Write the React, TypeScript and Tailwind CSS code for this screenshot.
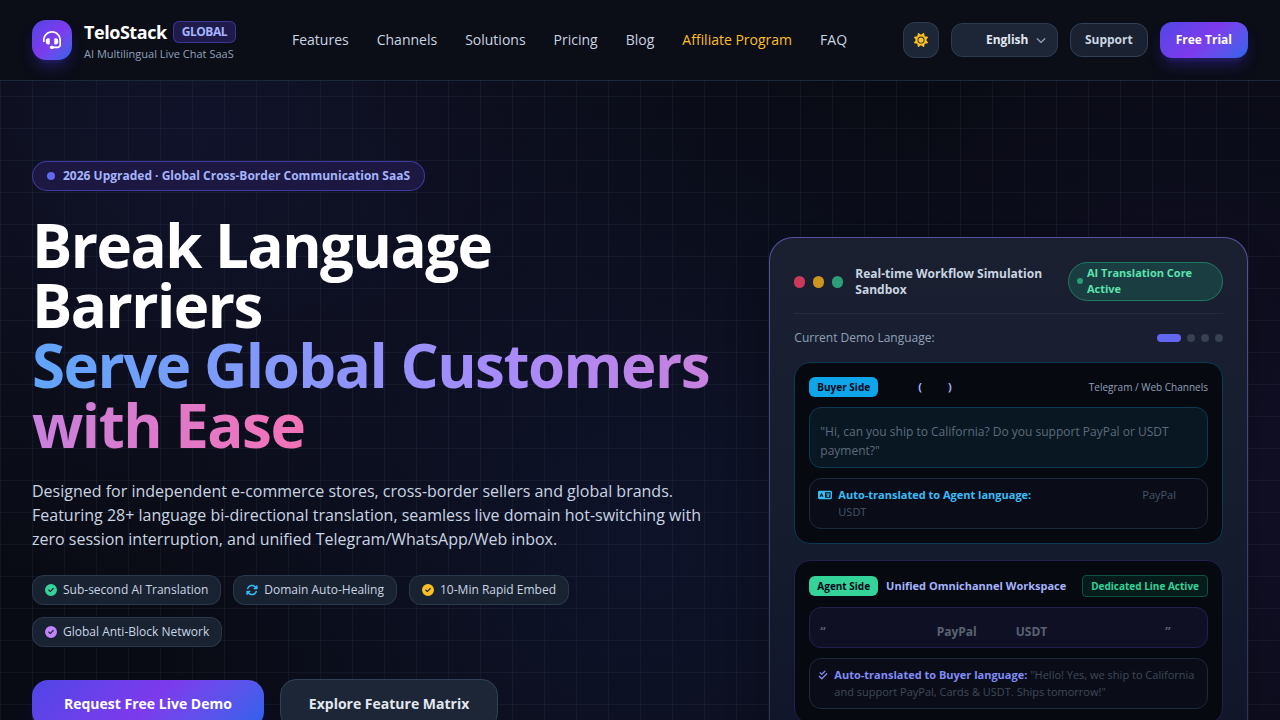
import {
  FaHeadset,
  FaSun,
  FaChevronDown,
  FaCircleCheck,
  FaArrowsRotate,
  FaLanguage,
  FaCheckDouble,
} from "react-icons/fa6";

const navLinks = [
  { label: "Features", href: "#features" },
  { label: "Channels", href: "#channels" },
  { label: "Solutions", href: "#solutions" },
  { label: "Pricing", href: "#pricing" },
  { label: "Blog", href: "#blog" },
  { label: "Affiliate Program", href: "#affiliate", highlight: true },
  { label: "FAQ", href: "#faq" },
];

const chips = [
  { label: "Sub-second AI Translation", Icon: FaCircleCheck, color: "text-[#34d399]" },
  { label: "Domain Auto-Healing", Icon: FaArrowsRotate, color: "text-[#38bdf8]" },
  { label: "10-Min Rapid Embed", Icon: FaCircleCheck, color: "text-[#fbbf24]" },
  { label: "Global Anti-Block Network", Icon: FaCircleCheck, color: "text-[#c084fc]" },
];

function Header() {
  return (
    <header className="border-b border-slate-800 bg-[#0b0d17]">
      <div className="flex h-20 items-center justify-between px-8">
        {/* Logo */}
        <a href="#home" className="flex items-center gap-3">
          <span className="flex h-10 w-10 items-center justify-center rounded-[14px] bg-linear-135 from-[#4f46e5] via-[#7c3aed] to-[#2563eb] shadow-lg shadow-indigo-600/30">
            <FaHeadset className="text-lg text-white" />
          </span>
          <span className="flex flex-col">
            <span className="flex items-center gap-1.5 text-lg leading-7 font-bold tracking-tight text-white">
              TeloStack
              <span className="rounded-md border border-indigo-500/40 bg-[#1e1b4b] px-2 text-xs leading-5 text-[#a5b4fc]">
                GLOBAL
              </span>
            </span>
            <span className="text-[11px] leading-4 text-slate-400">AI Multilingual Live Chat SaaS</span>
          </span>
        </a>

        {/* Navigation */}
        <nav className="flex items-center gap-7 text-sm">
          {navLinks.map((link) => (
            <a key={link.label} href={link.href} className={link.highlight ? "text-[#fbbf24]" : "text-slate-300"}>
              {link.label}
            </a>
          ))}
        </nav>

        {/* Actions */}
        <div className="flex items-center gap-3 text-xs font-bold">
          <button
            type="button"
            aria-label="Toggle theme"
            className="flex h-9 w-9 items-center justify-center rounded-xl border border-slate-700/80 bg-[#1c2636] text-[#fbbf24]"
          >
            <FaSun className="text-sm" />
          </button>
          <div className="relative">
            <select
              aria-label="Language"
              className="h-[34px] w-[107px] appearance-none rounded-xl border border-slate-700/80 bg-[#1c2636] pl-[34px] text-slate-200"
            >
              <option>English</option>
            </select>
            <FaChevronDown className="pointer-events-none absolute top-3 right-3 text-[10px] text-slate-400" />
          </div>
          <a
            href="#support"
            className="rounded-xl border border-slate-700 bg-[#1a2131] px-3.5 py-2 leading-4 text-slate-300"
          >
            Support
          </a>
          <a
            href="#trial"
            className="rounded-xl bg-linear-135 from-[#4f46e5] via-[#7c3aed] to-[#2563eb] px-4 py-2.5 leading-4 text-white shadow-lg shadow-indigo-600/30"
          >
            Free Trial
          </a>
        </div>
      </div>
    </header>
  );
}

function HeroCopy() {
  return (
    <div className="col-span-7">
      <div className="mb-6 flex">
        <p className="flex items-center gap-2 rounded-full border border-indigo-500/50 bg-[#1c1842] px-3.5 py-1.5 text-xs font-bold text-[#a5b4fc]">
          <span className="h-2 w-2 rounded-full bg-[#6366f1]"></span>
          2026 Upgraded · Global Cross-Border Communication SaaS
        </p>
      </div>
      <h1 className="mb-6 text-6xl leading-none font-bold tracking-tight text-white">
        Break Language Barriers
        <br />
        <span className="bg-[linear-gradient(to_right,#60a5fa,#a78bfa,#f472b6)] bg-clip-text text-transparent">
          Serve Global Customers with Ease
        </span>
      </h1>
      <p className="mb-6 max-w-2xl text-base text-slate-300">
        Designed for independent e-commerce stores, cross-border sellers and global brands. Featuring 28+ language
        bi-directional translation, seamless live domain hot-switching with zero session interruption, and unified
        Telegram/WhatsApp/Web inbox.
      </p>
      <ul className="mb-8 flex max-w-2xl flex-wrap gap-3">
        {chips.map(({ label, Icon, color }) => (
          <li
            key={label}
            className="flex items-center gap-1.5 rounded-xl border border-slate-700/70 bg-[#192231] px-3 py-1.5 text-xs text-slate-300"
          >
            <Icon className={color} />
            {label}
          </li>
        ))}
      </ul>
      <div className="flex items-center gap-4 text-sm font-bold">
        <a
          href="#demo"
          className="rounded-2xl bg-linear-135 from-[#4f46e5] via-[#7c3aed] to-[#2563eb] px-8 py-3.5 text-white shadow-xl shadow-indigo-600/20"
        >
          Request Free Live Demo
        </a>
        <a
          href="#matrix"
          className="rounded-2xl border border-slate-700 bg-[#1c2636] px-7 py-3.5 text-slate-200"
        >
          Explore Feature Matrix
        </a>
      </div>
    </div>
  );
}

function Sandbox() {
  return (
    <div className="col-span-5 mt-[76px] rounded-3xl bg-linear-to-b from-[#56509f] via-[#42436f] to-[#2b3350] p-px shadow-2xl shadow-black/40">
      <div className="rounded-[23px] bg-linear-to-b from-[#1b2031] via-[#151d2e] to-[#11152a] p-6">
        {/* Window bar */}
        <div className="flex items-center justify-between gap-3 border-b border-slate-700/40 pb-3">
          <div className="flex items-center gap-2">
            <span className="h-3 w-[11px] shrink-0 rounded-full bg-[#cb3a59]"></span>
            <span className="h-3 w-[11px] shrink-0 rounded-full bg-[#cb951f]"></span>
            <span className="h-3 w-[11px] shrink-0 rounded-full bg-[#2a9f78]"></span>
            <h2 className="ml-1 text-xs font-bold text-slate-300">Real-time Workflow Simulation Sandbox</h2>
          </div>
          <p className="flex w-[155px] shrink-0 items-center gap-1 rounded-full border border-[#1f7a63] bg-[#193d40] px-2 pt-0.5 pb-[3px] text-[11px] leading-4 font-bold text-[#5ce3b0]">
            <span className="h-1.5 w-1.5 shrink-0 rounded-full bg-[#2a9f78]"></span>
            AI Translation Core Active
          </p>
        </div>

        <div className="my-4 flex items-center justify-between">
          <p className="text-xs text-slate-400">Current Demo Language:</p>
          <div className="flex gap-1.5">
            <span className="h-2 w-6 rounded-full bg-[#6366f1]"></span>
            <span className="h-2 w-2 rounded-full bg-[#374151]"></span>
            <span className="h-2 w-2 rounded-full bg-[#374151]"></span>
            <span className="h-2 w-2 rounded-full bg-[#374151]"></span>
          </div>
        </div>

        {/* Buyer */}
        <section className="mb-4 rounded-2xl border border-[#0c3a52] bg-[#070911] p-3.5">
          <div className="flex items-center justify-between">
            <div className="flex items-center text-[11px] leading-5 font-bold">
              <span className="rounded-md bg-[#0ea5e9] px-2 text-[10px] text-slate-950">Buyer Side</span>
              <span className="ml-10 text-[#a5b4fc]">(</span>
              <span className="ml-[26px] text-[#a5b4fc]">)</span>
            </div>
            <span className="text-[10px] leading-5 text-slate-400">Telegram / Web Channels</span>
          </div>
          <p className="mt-2.5 rounded-xl border border-[#0c3a52] bg-[#081722] px-2.5 pt-3.5 pb-[7px] text-xs leading-[19px] text-[#5f6b7b]">
            "Hi, can you ship to California? Do you support PayPal or USDT payment?"
          </p>
          <div className="mt-2.5 flex gap-1.5 rounded-xl border border-slate-800 bg-[#0a0d17] px-2 pt-[7px] pb-2 text-[11px] leading-[17px] text-slate-600">
            <FaLanguage className="mt-0.5 shrink-0 text-sm text-[#38bdf8]" />
            <p>
              <strong className="mr-[111px] text-[#38bdf8]">Auto-translated to Agent language:</strong>
              PayPal
              <br />
              USDT
            </p>
          </div>
        </section>

        {/* Agent */}
        <section className="rounded-2xl border border-[#23204f] bg-[#070911] p-3.5">
          <div className="flex items-center justify-between">
            <div className="flex items-center gap-2 text-[11px] leading-5 font-bold">
              <span className="rounded-md bg-[#34d399] px-2 text-[10px] text-slate-950">Agent Side</span>
              <span className="text-[#a5b4fc]">Unified Omnichannel Workspace</span>
            </div>
            <span className="rounded-sm border border-[#10503f] bg-[#051c1a] px-2 text-[10px] leading-5 font-bold text-[#34d399]">
              Dedicated Line Active
            </span>
          </div>
          <p className="mt-2.5 flex rounded-xl border border-[#23204f] bg-[#0f1024] px-2.5 pt-3.5 pb-1.5 text-xs leading-[19px] font-bold text-[#5a6271]">
            <span>“</span>
            <span className="ml-[111px]">PayPal</span>
            <span className="ml-[39px]">USDT</span>
            <span className="ml-[118px]">”</span>
          </p>
          <div className="mt-2.5 flex gap-1.5 rounded-xl border border-slate-800 bg-[#0a0d17] px-2 pt-[7px] pb-2 text-[11px] leading-[17px] text-[#3f4959]">
            <FaCheckDouble className="mt-1 shrink-0 text-[10px] text-[#818cf8]" />
            <p>
              <strong className="text-[#818cf8]">Auto-translated to Buyer language:</strong> "Hello! Yes, we ship to
              California and support PayPal, Cards &amp; USDT. Ships tomorrow!"
            </p>
          </div>
        </section>
      </div>
    </div>
  );
}

export default function App() {
  return (
    <div className="h-screen overflow-hidden bg-[#090b14] font-['Open_Sans',sans-serif]">
      <Header />
      <div className="bg-[radial-gradient(ellipse_520px_460px_at_200px_60px,#11132b,#10122866_60%,transparent),radial-gradient(ellipse_480px_520px_at_640px_460px,#0e132a,transparent),radial-gradient(ellipse_400px_500px_at_1180px_420px,#121029,transparent)]">
        <main className="grid grid-cols-12 items-start gap-12 bg-[linear-gradient(to_right,#47556926_1px,transparent_1px),linear-gradient(to_bottom,#47556926_1px,transparent_1px)] bg-size-[32px_32px] bg-position-[0_15px] px-8 py-20">
          <HeroCopy />
          <Sandbox />
        </main>
      </div>
    </div>
  );
}
